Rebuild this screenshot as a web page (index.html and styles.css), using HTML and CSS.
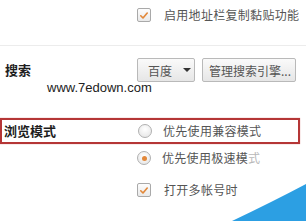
FILE: index.html
```html
<!DOCTYPE html>
<html>
<head>
<meta charset="utf-8">
<link rel="stylesheet" href="styles.css">
</head>
<body>
<div class="page">
  <div class="row row-top">
    <span class="check"><svg viewBox="0 0 13 13" width="13" height="13"><path d="M3 6.8 L5.4 9.2 L10 3.8" fill="none" stroke="#e2883a" stroke-width="1.8" stroke-linecap="round" stroke-linejoin="round"/></svg></span>
    <span class="opt">启用地址栏复制黏贴功能</span>
  </div>
  <div class="sep"></div>
  <div class="section search">
    <div class="label">搜索</div>
    <div class="controls">
      <div class="btn btn-engine">百度<span class="caret"></span></div>
      <div class="btn btn-manage">管理搜索引擎...</div>
    </div>
    <div class="watermark">www.7edown.com</div>
  </div>
  <div class="mode-box">
    <div class="label label-mode">浏览模式</div>
    <span class="radio"></span>
    <span class="opt">优先使用兼容模式</span>
  </div>
  <div class="row row-radio2">
    <span class="radio on"><span class="dot"></span></span>
    <span class="opt">优先使用极速模<span class="faded">式</span></span>
  </div>
  <div class="row row-check3">
    <span class="check"><svg viewBox="0 0 13 13" width="13" height="13"><path d="M3 6.8 L5.4 9.2 L10 3.8" fill="none" stroke="#e2883a" stroke-width="1.8" stroke-linecap="round" stroke-linejoin="round"/></svg></span>
    <span class="opt">打开多帐号时</span>
  </div>
  <svg class="corner" width="74" height="37" viewBox="0 0 74 37"><path d="M0 37 Q40 18 74 0 L74 37 Z" fill="#2c9fe3"/></svg>
</div>
</body>
</html>
```
FILE: styles.css
```css
html, body {
  margin: 0;
  padding: 0;
  background: #ffffff;
}
.page {
  position: relative;
  width: 306px;
  height: 221px;
  overflow: hidden;
  font-family: "Noto Sans CJK SC", "Noto Sans", sans-serif;
}
.row {
  display: flex;
  align-items: center;
  padding-left: 137px;
}
.row-top {
  height: 30px;
}
.opt {
  font-size: 12px;
  color: #555555;
  margin-left: 13px;
  letter-spacing: 0.3px;
  line-height: 14px;
}
.faded {
  color: #b8b8b8;
}
.check {
  box-sizing: border-box;
  width: 14px;
  height: 14px;
  border: 1px solid #a9a9a9;
  border-radius: 2px;
  background: linear-gradient(#fdfdfd, #e9e9e9);
  display: flex;
  align-items: center;
  justify-content: center;
}
.check svg {
  display: block;
}
.sep {
  height: 15px;
  border-bottom: 1px solid #ececec;
}
.section {
  position: relative;
  display: flex;
  align-items: center;
  margin-top: 12px;
  height: 24px;
}
.label {
  font-size: 13px;
  font-weight: bold;
  color: #1e1e1e;
  line-height: 14px;
}
.search .label {
  width: 132px;
  padding-left: 5px;
}
.controls {
  display: flex;
  gap: 7px;
}
.btn {
  box-sizing: border-box;
  height: 24px;
  border: 1px solid #b9b9b9;
  border-radius: 2px;
  background: linear-gradient(#fafafa, #e6e6e6);
  font-size: 12px;
  color: #555555;
  display: flex;
  align-items: center;
}
.btn-engine {
  width: 58px;
  padding-left: 10px;
}
.caret {
  width: 0;
  height: 0;
  border-left: 4px solid transparent;
  border-right: 4px solid transparent;
  border-top: 4px solid #333333;
  margin-left: 11px;
}
.btn-manage {
  width: 94px;
  padding-left: 6px;
}
.watermark {
  position: absolute;
  left: 47px;
  top: 22px;
  font-family: "Liberation Sans", Arial, sans-serif;
  font-size: 13px;
  line-height: 15px;
  color: #222222;
}
.mode-box {
  box-sizing: border-box;
  margin-top: 36px;
  width: 300px;
  height: 26px;
  border: 2px solid #b53636;
  box-shadow: 0 0 1px #d88a8a;
  display: flex;
  align-items: center;
}
.label-mode {
  width: 134px;
  padding-left: 2px;
}
.radio {
  box-sizing: border-box;
  width: 14px;
  height: 14px;
  border: 1px solid #b0b0b0;
  border-radius: 50%;
  background: radial-gradient(circle at 50% 35%, #ffffff, #e2e2e2);
  display: flex;
  align-items: center;
  justify-content: center;
}
.mode-box .opt {
  margin-left: 11px;
}
.row-radio2 {
  height: 28px;
}
.row-radio2 .opt {
  margin-left: 11px;
}
.dot {
  width: 5px;
  height: 5px;
  border-radius: 50%;
  background: #e2883a;
}
.row-check3 {
  height: 36px;
}
.corner {
  position: absolute;
  right: 0;
  bottom: 0;
}
```
